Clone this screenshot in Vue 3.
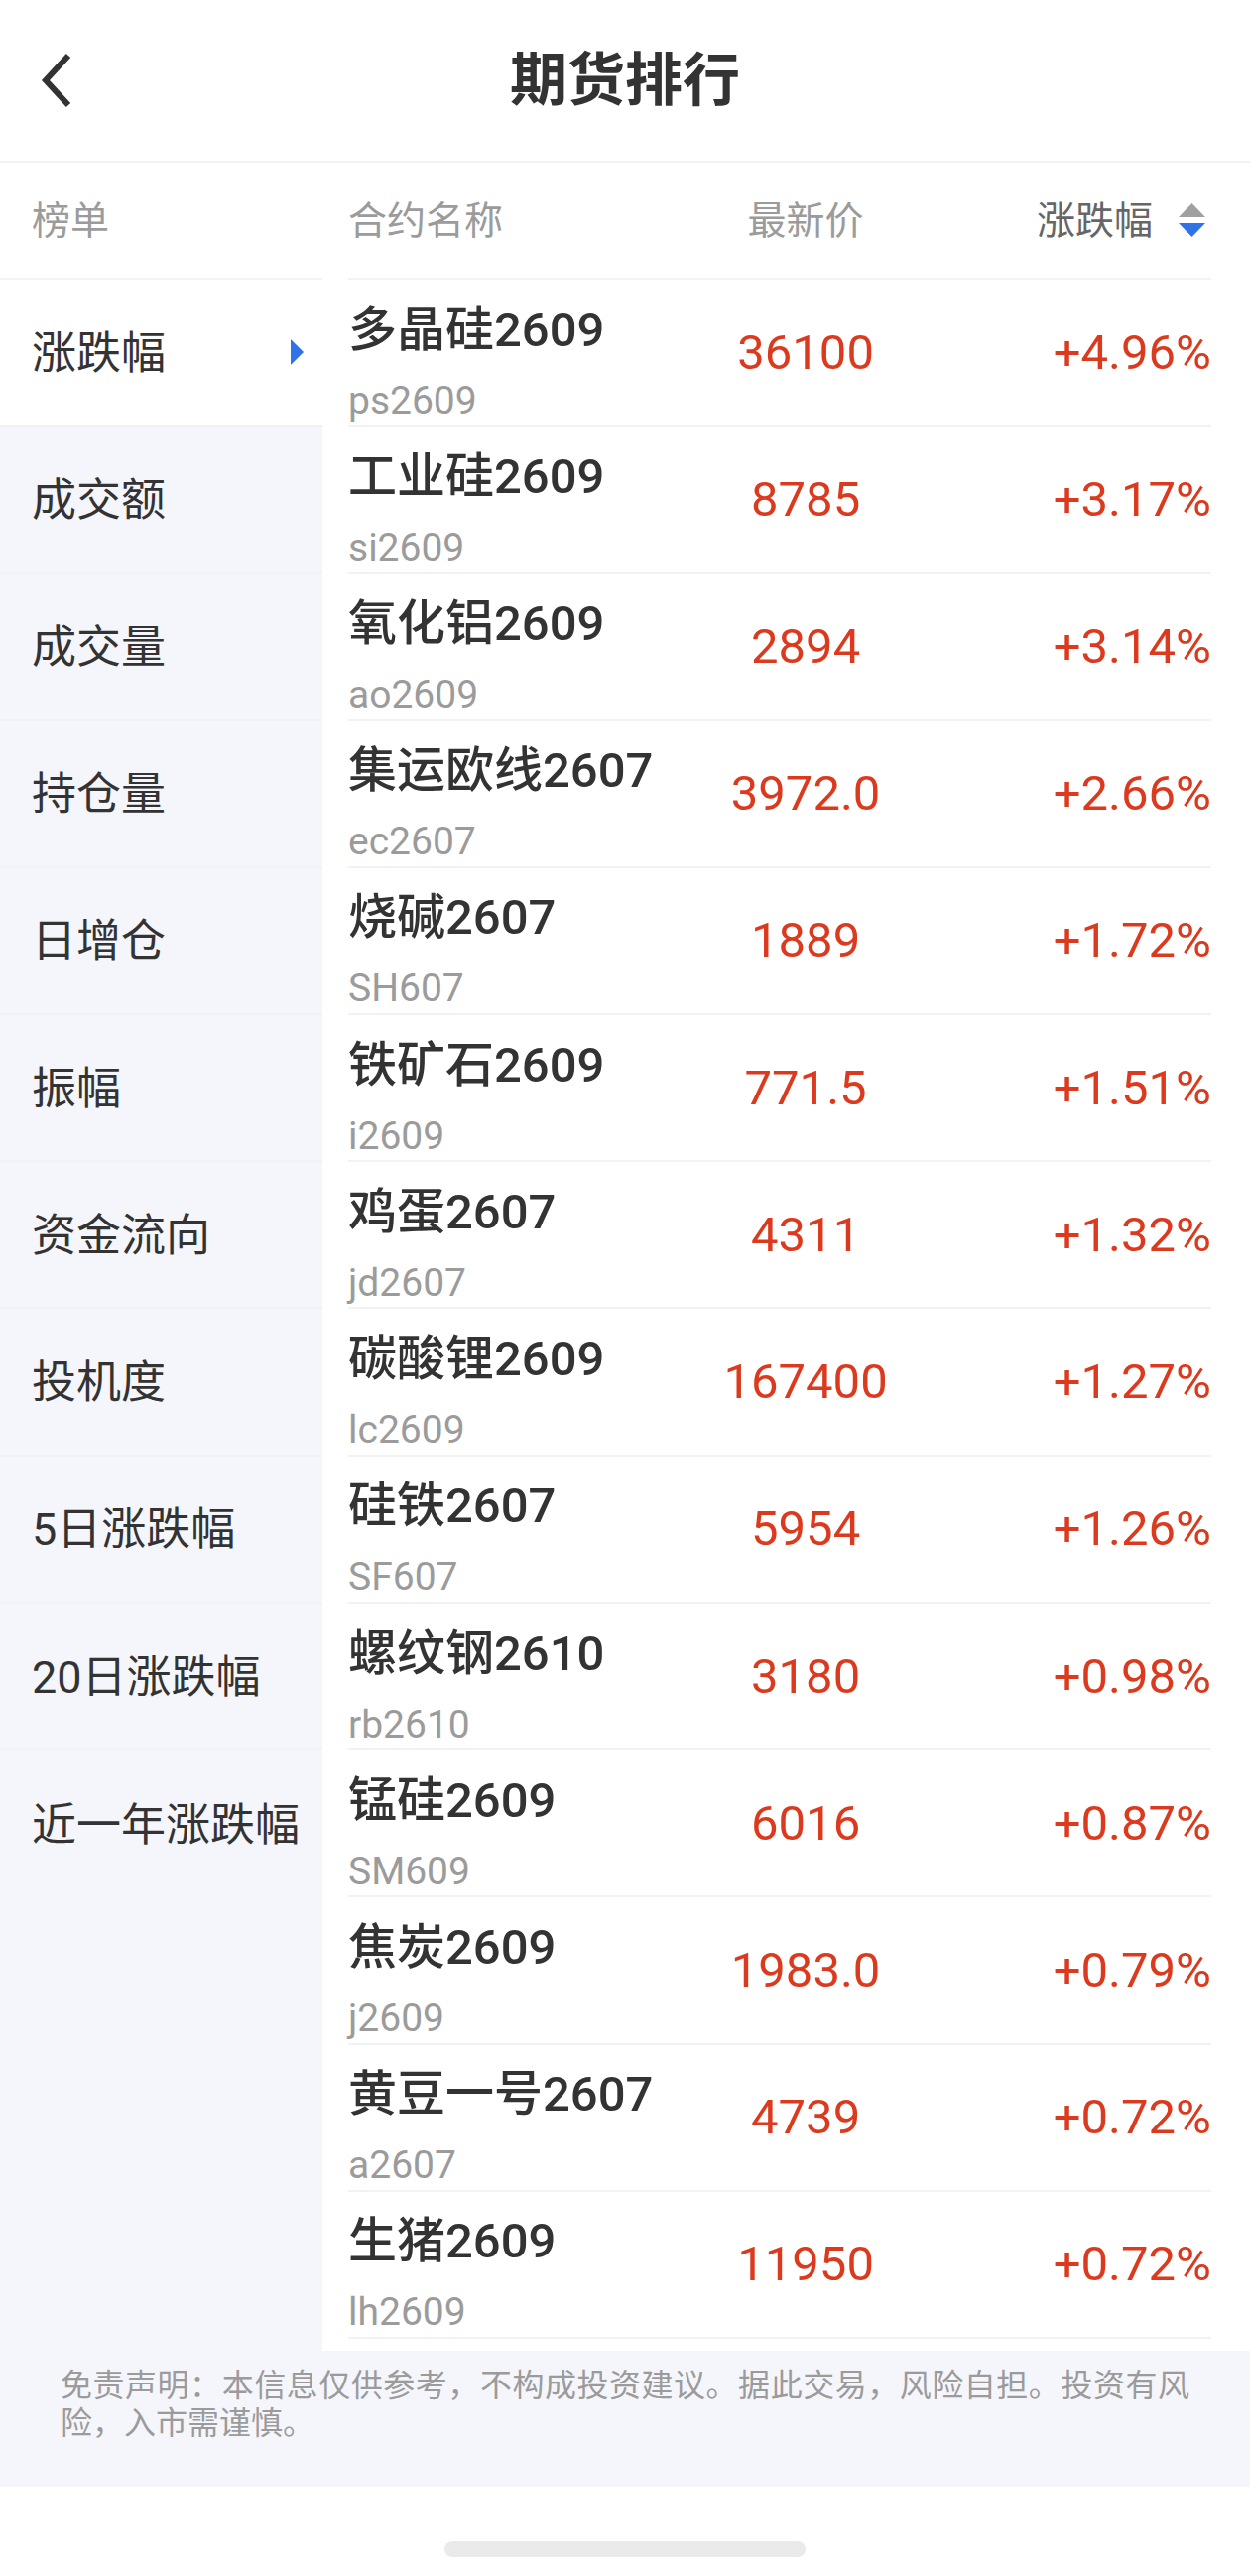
<template>
  <div class="page">
    <header class="topbar">
      <button class="back" type="button" aria-label="返回">
        <svg width="32" height="56" viewBox="0 0 32 56" fill="none">
          <path d="M29 3 6 28l23 25" stroke="#333" stroke-width="6" />
        </svg>
      </button>
      <h1>期货排行</h1>
    </header>

    <main class="content">
      <nav class="sidebar">
        <div class="sidebar-title"><span class="label">榜单</span></div>
        <ul class="sidebar-list">
          <li v-for="item in boards" :key="item">
            <button
              type="button"
              class="board"
              :class="{ active: item === activeBoard }"
              @click="activeBoard = item"
            >
              <span class="label">{{ item }}</span>
              <svg v-if="item === activeBoard" width="13" height="26" viewBox="0 0 13 26">
                <path d="M0 0 13 13 0 26z" fill="#2e73e8" />
              </svg>
            </button>
          </li>
        </ul>
      </nav>

      <table class="quotes">
        <thead>
          <tr>
            <th scope="col" class="col-name"><span class="label">合约名称</span></th>
            <th scope="col" class="col-price"><span class="label">最新价</span></th>
            <th scope="col" class="col-change">
              <button type="button" class="sort" @click="descending = !descending">
                <span class="label">涨跌幅</span>
                <svg width="27" height="34" viewBox="0 0 27 34">
                  <path d="M13.500 0 27 14H0z" :fill="descending ? '#a0a0a0' : '#2e73e8'" />
                  <path d="M0 20h27L13.500 34z" :fill="descending ? '#2e73e8' : '#a0a0a0'" />
                </svg>
              </button>
            </th>
          </tr>
        </thead>
        <tbody>
          <tr v-for="row in sortedRows" :key="row.code">
            <td class="col-name">
              <span class="name">{{ row.name }}</span>
              <span class="code">{{ row.code }}</span>
            </td>
            <td class="col-price">{{ row.price }}</td>
            <td class="col-change">+{{ row.change.toFixed(2) }}%</td>
          </tr>
        </tbody>
      </table>
    </main>

    <p class="disclaimer">免责声明：本信息仅供参考，不构成投资建议。据此交易，风险自担。投资有风险，入市需谨慎。</p>

    <div class="home-area">
      <div class="home-bar"></div>
    </div>
  </div>
</template>

<script setup>
import { ref, computed } from 'vue'

const boards = [
  '涨跌幅',
  '成交额',
  '成交量',
  '持仓量',
  '日增仓',
  '振幅',
  '资金流向',
  '投机度',
  '5日涨跌幅',
  '20日涨跌幅',
  '近一年涨跌幅'
]

const rows = [
  { name: '多晶硅2609', code: 'ps2609', price: '36100', change: 4.96 },
  { name: '工业硅2609', code: 'si2609', price: '8785', change: 3.17 },
  { name: '氧化铝2609', code: 'ao2609', price: '2894', change: 3.14 },
  { name: '集运欧线2607', code: 'ec2607', price: '3972.0', change: 2.66 },
  { name: '烧碱2607', code: 'SH607', price: '1889', change: 1.72 },
  { name: '铁矿石2609', code: 'i2609', price: '771.5', change: 1.51 },
  { name: '鸡蛋2607', code: 'jd2607', price: '4311', change: 1.32 },
  { name: '碳酸锂2609', code: 'lc2609', price: '167400', change: 1.27 },
  { name: '硅铁2607', code: 'SF607', price: '5954', change: 1.26 },
  { name: '螺纹钢2610', code: 'rb2610', price: '3180', change: 0.98 },
  { name: '锰硅2609', code: 'SM609', price: '6016', change: 0.87 },
  { name: '焦炭2609', code: 'j2609', price: '1983.0', change: 0.79 },
  { name: '黄豆一号2607', code: 'a2607', price: '4739', change: 0.72 },
  { name: '生猪2609', code: 'lh2609', price: '11950', change: 0.72 }
]

const activeBoard = ref('涨跌幅')
const descending = ref(true)

const sortedRows = computed(() => {
  return [...rows].sort((a, b) =>
    descending.value ? b.change - a.change : a.change - b.change
  )
})
</script>

<style>
body {
  margin: 0;
  background: #fff;
}
</style>

<style scoped>
.page {
  display: flex;
  flex-direction: column;
  min-height: 100vh;
  background: #fff;
  color: #333;
  font-family: Roboto, "Noto Sans CJK SC", sans-serif;
}

button {
  border: none;
  padding: 0;
  background: none;
  color: inherit;
  font: inherit;
  cursor: pointer;
}

svg {
  display: block;
  flex: none;
}

/* 顶部标题栏 */
.topbar {
  display: grid;
  grid-template-columns: 120px 1fr 120px;
  align-items: center;
  height: 162px;
  border-bottom: 2px solid #f2f2f3;
}

.back {
  justify-self: start;
  padding-left: 40px;
}

h1 {
  margin: 0;
  font-size: 58px;
  line-height: 80px;
  font-weight: 700;
  text-align: center;
}

.content {
  flex: 1;
  display: grid;
  grid-template-columns: 325px minmax(0, 1fr);
}

.label {
  display: inline-block;
  padding-bottom: 6px;
}

/* 左侧榜单 */
.sidebar {
  display: grid;
  grid-template-rows: 118px 1fr;
  background: #f5f6fb;
}

.sidebar-title {
  display: flex;
  align-items: center;
  padding-left: 32px;
  border-bottom: 2px solid #f2f2f3;
  background: #fff;
  color: #9b9b9b;
  font-size: 39px;
}

.sidebar-list {
  display: grid;
  grid-template-rows: repeat(14, minmax(148px, 1fr));
  margin: 0;
  padding: 0 0 12px;
  list-style: none;
}

.sidebar-list li {
  display: flex;
  border-bottom: 2px solid #f0f1f5;
}

.sidebar-list li:last-child {
  border-bottom: none;
}

.board {
  flex: 1;
  display: flex;
  align-items: center;
  justify-content: space-between;
  padding: 0 19px 0 32px;
  font-size: 45px;
  white-space: nowrap;
}

.board.active {
  background: #fff;
}

/* 行情列表 */
.quotes {
  display: grid;
  grid-template-rows: 118px 1fr;
  padding: 0 39px 12px 26px;
}

.quotes thead,
.quotes tbody {
  display: grid;
}

.quotes tbody {
  grid-auto-rows: minmax(148px, 1fr);
}

.quotes tr {
  display: grid;
  grid-template-columns: 38fr 30fr 32fr;
  align-items: center;
  border-bottom: 2px solid #f2f2f3;
}

.quotes th,
.quotes td {
  padding: 0;
  white-space: nowrap;
}

.quotes th {
  color: #9b9b9b;
  font-size: 39px;
  font-weight: 400;
}

.quotes td {
  color: #dc3a1e;
  font-size: 49px;
}

.quotes .col-name {
  text-align: left;
}

.quotes .col-price {
  text-align: center;
}

.quotes .col-change {
  text-align: right;
}

.quotes td.col-name {
  display: flex;
  flex-direction: column;
  gap: 14px;
  padding-top: 17px;
}

.name {
  color: #333;
  font-size: 49px;
  line-height: 66px;
  font-weight: 500;
}

.code {
  color: #9b9b9b;
  font-size: 39px;
  line-height: 48px;
}

.sort {
  display: inline-flex;
  align-items: center;
  gap: 26px;
  padding-right: 6px;
  color: #666;
}

/* 免责声明 */
.disclaimer {
  margin: 0;
  padding: 16px 61px 45px;
  background: #f5f6fb;
  color: #9b9b9b;
  font-size: 32px;
  line-height: 38px;
  text-align: justify;
}

.home-area {
  display: flex;
  justify-content: center;
  padding: 55px 0 19px;
}

.home-bar {
  width: 364px;
  height: 16px;
  border-radius: 8px;
  background: #eaeaea;
}
</style>
